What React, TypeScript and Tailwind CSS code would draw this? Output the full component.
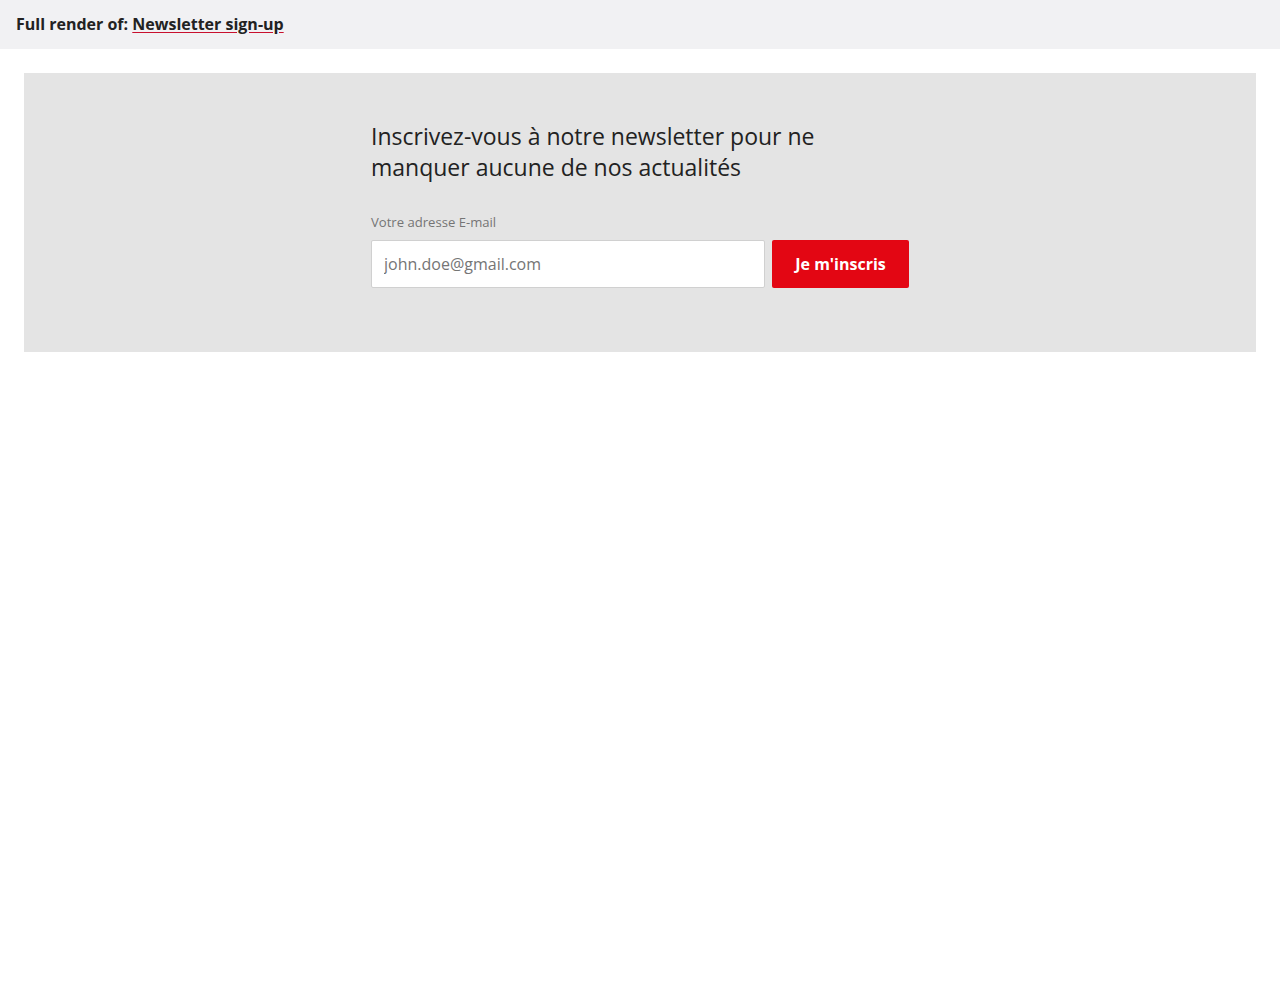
import React from 'react';

export default function App() {
  return (
    <div className="min-h-screen bg-white text-[#222] font-['Open_Sans',sans-serif]">
      <div className="h-[49px] bg-[#f1f1f3] px-4 pb-[2px] flex items-center text-base font-bold">
        <span>Full render of:&nbsp;</span>
        <a href="#" className="underline decoration-[#c8102e] underline-offset-2">Newsletter sign-up</a>
      </div>

      <div className="px-6 pt-6">
        <section className="bg-[#e4e4e4] pt-[48px] pb-[64px] flex justify-center">
          <div className="w-[538px]">
            <h2 className="text-[23px] leading-[31px] font-normal text-[#222] max-w-[480px]">
              Inscrivez-vous à notre newsletter pour ne manquer aucune de nos actualités
            </h2>
            <form className="mt-[30px]" onSubmit={(e) => e.preventDefault()}>
              <label htmlFor="email" className="block text-[13.1px] leading-[18px] text-[#757575] mb-[9px]">
                Votre adresse E-mail
              </label>
              <div className="flex gap-[7px]">
                <input
                  id="email"
                  type="email"
                  placeholder="john.doe@gmail.com"
                  className="w-[394px] h-12 bg-white border border-[#d0d0d0] rounded-[2px] px-3 text-base text-[#222] placeholder:text-[#757575] outline-none"
                />
                <button
                  type="submit"
                  className="w-[137px] h-12 bg-[#e30613] text-white font-bold text-base rounded-[2px]"
                >
                  Je m'inscris
                </button>
              </div>
            </form>
          </div>
        </section>
      </div>
    </div>
  );
}
